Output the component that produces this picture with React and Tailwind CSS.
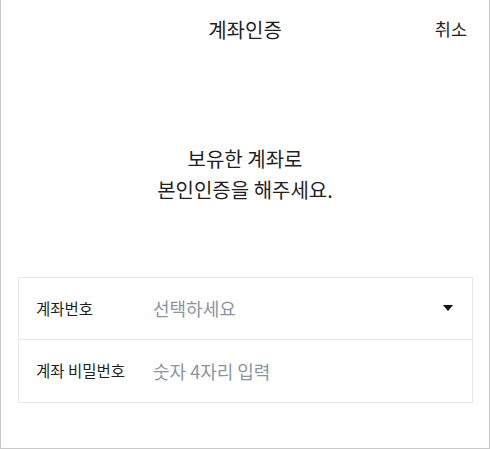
export default function App() {
  return (
    <div
      className="w-[490px] h-[449px] bg-white border-x border-b border-[#c9c9c9] text-[#1f1f1f] flex flex-col"
      style={{ fontFamily: '"Noto Sans CJK KR", "Noto Sans", sans-serif' }}
    >
      {/* Header */}
      <div className="relative h-[60px] flex items-center justify-center">
        <h1 className="text-[20px] font-normal">계좌인증</h1>
        <button className="absolute right-[22px] top-[16px] text-[17.5px]">취소</button>
      </div>

      {/* Message */}
      <div className="mt-[83px] text-center text-[20px] leading-[31px]">
        <p>보유한 계좌로</p>
        <p>본인인증을 해주세요.</p>
      </div>

      {/* Form card */}
      <div className="mt-[72px] ml-[17px] mr-[16px] border border-[#e6e8eb]">
        <div className="h-[62px] flex items-center pl-[17px] pr-[18px] border-b border-[#e6e8eb]">
          <span className="w-[117px] text-[15.5px]">계좌번호</span>
          <span className="flex-1 text-[18px] text-[#8b95a1]">선택하세요</span>
          <svg width="10" height="7" viewBox="0 0 10 7" className="mr-[1px]">
            <path d="M0 0 H10 L5 6 Z" fill="#111" />
          </svg>
        </div>
        <div className="h-[62px] flex items-center pl-[17px] pr-[18px]">
          <span className="w-[117px] text-[15.5px]">계좌 비밀번호</span>
          <span className="flex-1 text-[18px] text-[#8b95a1]">숫자 4자리 입력</span>
        </div>
      </div>
    </div>
  )
}
